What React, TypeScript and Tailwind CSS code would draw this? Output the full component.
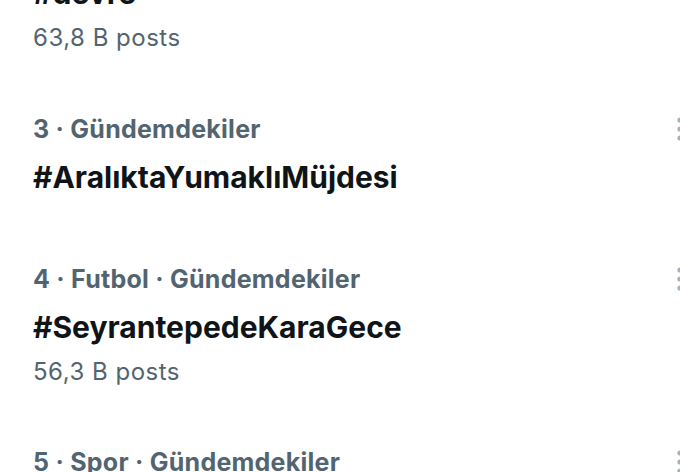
type Trend = {
  meta: string;
  tag: string;
  posts?: string;
};

const trends: Trend[] = [
  { meta: '3 · Gündemdekiler', tag: '#AralıktaYumaklıMüjdesi' },
  { meta: '4 · Futbol · Gündemdekiler', tag: '#SeyrantepedeKaraGece', posts: '56,3 B posts' },
  { meta: '5 · Spor · Gündemdekiler', tag: '#' },
];

function MoreIcon() {
  return (
    <svg width="8" height="24" viewBox="0 0 8 24" className="shrink-0 -mr-[4px] mt-[4px]">
      <circle cx="4" cy="3" r="2.6" fill="#a9b1b8" />
      <circle cx="4" cy="12" r="2.6" fill="#a9b1b8" />
      <circle cx="4" cy="21" r="2.6" fill="#a9b1b8" />
    </svg>
  );
}

function TrendRow({ trend, last }: { trend: Trend; last?: boolean }) {
  return (
    <div className="flex items-start justify-between">
      <div className="flex flex-col">
        <span className="text-[25px] leading-[32px] font-bold text-[#536471] tracking-[0.25px]">
          {trend.meta}
        </span>
        {!last && (
          <span className="mt-[14px] text-[30px] leading-[36px] font-bold text-[#0f1419]">
            {trend.tag}
          </span>
        )}
        {trend.posts && (
          <span className="mt-[11px] text-[24px] leading-[32px] text-[#536471] tracking-[0.5px]">
            {trend.posts}
          </span>
        )}
      </div>
      <MoreIcon />
    </div>
  );
}

export default function App() {
  return (
    <div
      className="w-[680px] h-[472px] overflow-hidden bg-white pl-[33px] pr-0"
      style={{ fontFamily: 'Inter, "Noto Sans", sans-serif' }}
    >
      <div className="flex flex-col">
        <span className="-mt-[25px] text-[30px] leading-[36px] font-bold text-[#0f1419]">#devre</span>
        <span className="mt-[11px] text-[24px] leading-[32px] text-[#536471] tracking-[0.5px]">
          63,8 B posts
        </span>
      </div>
      <div className="mt-[59px]">
        <TrendRow trend={trends[0]} />
      </div>
      <div className="mt-[68px]">
        <TrendRow trend={trends[1]} />
      </div>
      <div className="mt-[58px]">
        <TrendRow trend={trends[2]} last />
      </div>
    </div>
  );
}
